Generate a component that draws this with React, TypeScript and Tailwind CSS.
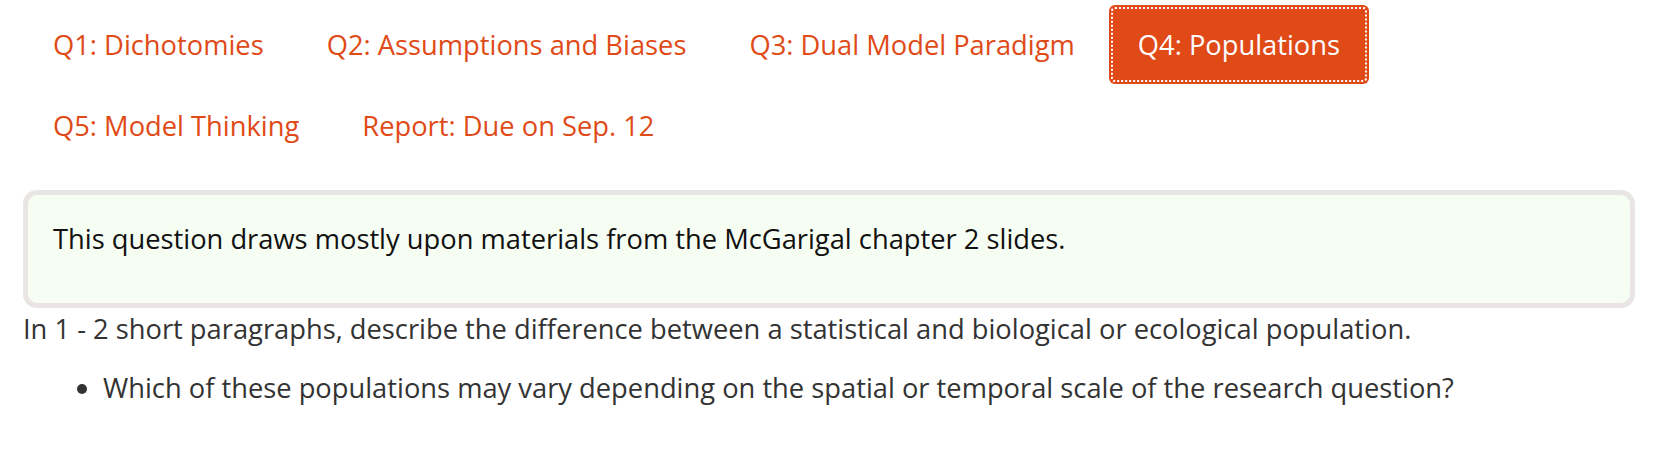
import React from 'react';

const tabs = [
  'Q1: Dichotomies',
  'Q2: Assumptions and Biases',
  'Q3: Dual Model Paradigm',
  'Q4: Populations',
  'Q5: Model Thinking',
  'Report: Due on Sep. 12',
];

const ACTIVE = 'Q4: Populations';

export default function App() {
  return (
    <div
      className="min-h-screen bg-white text-[27.3px]"
      style={{ fontFamily: '"Open Sans", "Noto Sans", sans-serif' }}
    >
      {/* Tabs */}
      <ul className="flex flex-wrap gap-x-[5px] gap-y-[2px] pt-[5px] pl-[24px] pr-[19px]">
        {tabs.map((t) => (
          <li key={t}>
            <a
              className={
                t === ACTIVE
                  ? 'block px-[29px] py-[20px] leading-[39px] rounded-[6px] bg-[#e04a17] text-white outline-2 outline-dotted outline-white -outline-offset-4'
                  : 'block px-[29px] py-[20px] leading-[39px] rounded-[6px] text-[#e04a17]'
              }
            >
              {t}
            </a>
          </li>
        ))}
      </ul>

      {/* Note box */}
      <div className="ml-[23px] mr-[19px] mt-[25px] border-[5px] border-[#e9e5e4] rounded-[14px] bg-[#f6fdf3] px-[25px] pt-[25px] pb-[25px]">
        <p className="leading-[38px] mb-[20px] text-[#111]">
          This question draws mostly upon materials from the McGarigal chapter 2 slides.
        </p>
      </div>

      {/* Question */}
      <div className="ml-[23px] mr-[19px] text-[#333]">
        <p className="leading-[38px] mt-[2px]">
          In 1 - 2 short paragraphs, describe the difference between a statistical and biological or ecological population.
        </p>
        <ul className="list-disc pl-[80px] mt-[21px]">
          <li className="leading-[38px]">
            Which of these populations may vary depending on the spatial or temporal scale of the research question?
          </li>
        </ul>
      </div>
    </div>
  );
}
